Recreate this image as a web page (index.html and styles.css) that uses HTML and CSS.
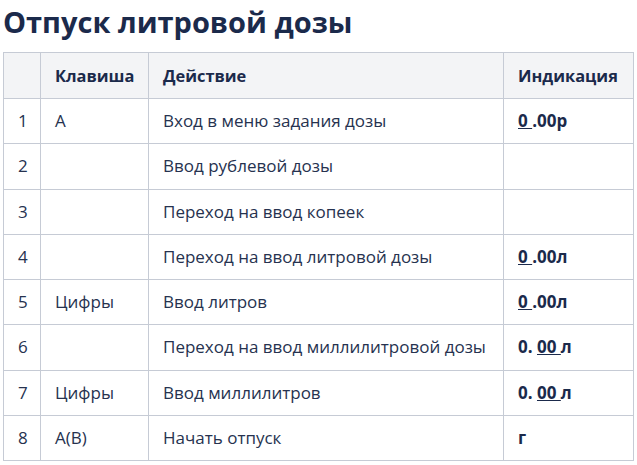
FILE: index.html
```html
<!DOCTYPE html>
<html lang="ru">
<head>
<meta charset="utf-8">
<link rel="stylesheet" href="styles.css">
</head>
<body>
<div class="page">
  <h1 class="title">Отпуск литровой дозы</h1>
  <table class="grid">
    <colgroup>
      <col class="c-num">
      <col class="c-key">
      <col class="c-act">
      <col class="c-ind">
    </colgroup>
    <thead>
      <tr><th></th><th>Клавиша</th><th>Действие</th><th>Индикация</th></tr>
    </thead>
    <tbody>
      <tr><td>1</td><td>А</td><td>Вход в меню задания дозы</td><td class="ind"><u>0 </u>.00р</td></tr>
      <tr><td>2</td><td></td><td>Ввод рублевой дозы</td><td class="ind"></td></tr>
      <tr><td>3</td><td></td><td>Переход на ввод копеек</td><td class="ind"></td></tr>
      <tr><td>4</td><td></td><td>Переход на ввод литровой дозы</td><td class="ind"><u>0 </u>.00л</td></tr>
      <tr><td>5</td><td>Цифры</td><td>Ввод литров</td><td class="ind"><u>0 </u>.00л</td></tr>
      <tr><td>6</td><td></td><td>Переход на ввод миллилитровой дозы</td><td class="ind">0. <u>00 </u>л</td></tr>
      <tr><td>7</td><td>Цифры</td><td>Ввод миллилитров</td><td class="ind">0. <u>00 </u>л</td></tr>
      <tr><td>8</td><td>А(В)</td><td>Начать отпуск</td><td class="ind">г</td></tr>
    </tbody>
  </table>
</div>
</body>
</html>
```
FILE: styles.css
```css
html, body {
  margin: 0;
  padding: 0;
  background: #ffffff;
}
body {
  font-family: "Open Sans", "Noto Sans", sans-serif;
  color: #1e2a4a;
}
.page {
  padding: 2px 4px 0 3px;
}
.title {
  margin: 0 0 10px 0;
  font-size: 29px;
  line-height: 40px;
  font-weight: 700;
  color: #1b2a4b;
}
.grid {
  width: 630px;
  border-collapse: collapse;
  table-layout: fixed;
  font-size: 17px;
}
.c-num { width: 37px; }
.c-key { width: 108px; }
.c-act { width: 355px; }
.c-ind { width: 130px; }
.grid th, .grid td {
  border: 1px solid #c6cbd5;
  text-align: left;
  padding: 12px 14px;
  line-height: 20.25px;
  white-space: nowrap;
}
.grid th {
  background: #f3f4f6;
  font-weight: 700;
  font-size: 16.4px;
  line-height: 20px;
  padding-top: 12.5px;
  padding-bottom: 12.5px;
  color: #1b2a4b;
}
.grid td {
  color: #26324f;
}
.grid td.ind {
  font-weight: 700;
  color: #1b2a4b;
}
.grid u {
  text-decoration-thickness: 1px;
}
```
